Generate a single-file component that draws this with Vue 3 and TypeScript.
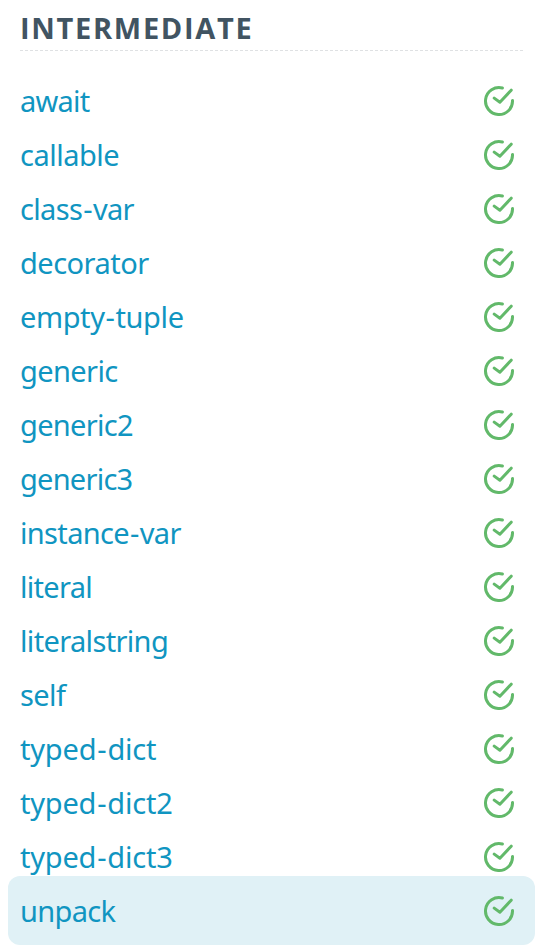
<script setup lang="ts">
interface Challenge {
  name: string
  tracking: number
}

const challenges: Challenge[] = [
  { name: 'await', tracking: -0.75 },
  { name: 'callable', tracking: -0.5 },
  { name: 'class-var', tracking: -0.65 },
  { name: 'decorator', tracking: -0.52 },
  { name: 'empty-tuple', tracking: -0.4 },
  { name: 'generic', tracking: -0.6 },
  { name: 'generic2', tracking: -0.68 },
  { name: 'generic3', tracking: -0.75 },
  { name: 'instance-var', tracking: -0.65 },
  { name: 'literal', tracking: -0.7 },
  { name: 'literalstring', tracking: -0.65 },
  { name: 'self', tracking: -0.6 },
  { name: 'typed-dict', tracking: -0.2 },
  { name: 'typed-dict2', tracking: -0.22 },
  { name: 'typed-dict3', tracking: -0.22 },
  { name: 'unpack', tracking: -0.65 },
]
const current = 'unpack'
</script>

<template>
  <section class="panel">
    <h2 class="heading">INTERMEDIATE</h2>
    <ul class="list">
      <li v-for="{ name, tracking } in challenges" :key="name" class="item" :class="{ active: name === current }">
        <a class="name" :style="{ letterSpacing: tracking + 'px' }"><template v-for="(part, i) in name.split('-')" :key="i"><span v-if="i > 0" class="hyphen">-</span>{{ part }}</template></a>
        <svg class="check" viewBox="0 0 32 32" fill="none">
          <path d="M19.4 3A13.5 13.5 0 1 0 29.5 15.6" />
          <path d="M11.2 13.1L16.9 17.2L28.2 5.2" />
        </svg>
      </li>
    </ul>
  </section>
</template>

<style>
body {
  margin: 0;
  background: #fff;
}
</style>

<style scoped>
.panel {
  box-sizing: border-box;
  width: 540px;
  height: 952px;
  padding: 0 5px 0 8px;
  overflow: hidden;
  font-family: "Noto Sans", "Open Sans", sans-serif;
}
.heading {
  box-sizing: border-box;
  height: 51px;
  margin: 0 12px;
  padding-top: 8px;
  border-bottom: 1px dashed #dfe1e3;
  color: #415462;
  font-family: "Open Sans", "Noto Sans", sans-serif;
  font-size: 29px;
  font-weight: 700;
  line-height: 40px;
  letter-spacing: 1.7px;
}
.list {
  margin: 0;
  padding: 15px 0 0;
  list-style: none;
}
.item {
  box-sizing: border-box;
  display: flex;
  align-items: center;
  justify-content: space-between;
  height: 69px;
  margin-bottom: -15px;
  padding: 0 20px 0 12px;
  border-radius: 12px;
}
.active {
  background: #e0f1f6;
}
.name {
  padding-top: 1px;
  color: #1095c1;
  font-size: 29px;
  line-height: 40px;
}
.hyphen {
  margin: 0 1px;
}
.check {
  width: 32px;
  height: 32px;
  margin-top: 1px;
}
.check path {
  stroke: #62b96a;
  stroke-width: 3;
  stroke-linecap: round;
  stroke-linejoin: round;
}
</style>
